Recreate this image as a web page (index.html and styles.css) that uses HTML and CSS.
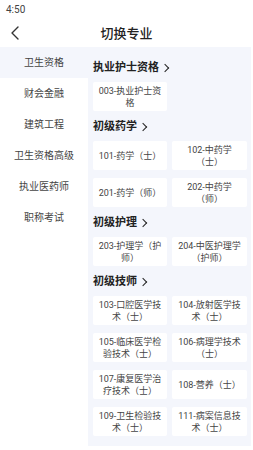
FILE: index.html
```html
<!DOCTYPE html>
<html lang="zh-CN">
<head>
    <meta charset="UTF-8">
    <meta name="viewport" content="width=device-width, initial-scale=1.0">
    <title>切换专业</title>
    <link rel="stylesheet" href="styles.css">
</head>
<body>
    <div class="status-bar">4:50</div>

    <header class="top-bar">
        <span class="back">
            <svg width="10" height="14" viewBox="0 0 10 14"><path d="M8 1 L2 7 L8 13" fill="none" stroke="#333" stroke-width="1.4" stroke-linecap="round" stroke-linejoin="round"/></svg>
        </span>
        <h1>切换专业</h1>
    </header>

    <div class="layout">
        <nav class="sidebar">
            <div class="side-item active">卫生资格</div>
            <div class="side-item">财会金融</div>
            <div class="side-item">建筑工程</div>
            <div class="side-item">卫生资格高级</div>
            <div class="side-item">执业医药师</div>
            <div class="side-item">职称考试</div>
        </nav>

        <main class="panel">
            <section class="group">
                <div class="group-title">执业护士资格 <span class="arrow"></span></div>
                <div class="cards">
                    <div class="card">003-执业护士资格</div>
                </div>
            </section>

            <section class="group">
                <div class="group-title">初级药学 <span class="arrow"></span></div>
                <div class="cards">
                    <div class="card">101-药学（士）</div>
                    <div class="card">102-中药学<wbr>（士）</div>
                    <div class="card">201-药学（师）</div>
                    <div class="card">202-中药学<wbr>（师）</div>
                </div>
            </section>

            <section class="group">
                <div class="group-title">初级护理 <span class="arrow"></span></div>
                <div class="cards">
                    <div class="card">203-护理学（护师）</div>
                    <div class="card">204-中医护理学（护师）</div>
                </div>
            </section>

            <section class="group">
                <div class="group-title">初级技师 <span class="arrow"></span></div>
                <div class="cards">
                    <div class="card">103-口腔医学技术（士）</div>
                    <div class="card">104-放射医学技术（士）</div>
                    <div class="card">105-临床医学检验技术（士）</div>
                    <div class="card">106-病理学技术（士）</div>
                    <div class="card">107-康复医学治疗技术（士）</div>
                    <div class="card">108-营养（士）</div>
                    <div class="card">109-卫生检验技术（士）</div>
                    <div class="card">111-病案信息技术（士）</div>
                </div>
            </section>
        </main>
    </div>
</body>
</html>
```

FILE: styles.css
```css
body {
    margin: 0;
    padding: 0;
    width: 253px;
    height: 450px;
    overflow: hidden;
    background: white;
    font-family: Roboto, "Noto Sans CJK SC", sans-serif;
    color: #333;
}

.status-bar {
    height: 18px;
    line-height: 20px;
    padding-left: 6px;
    font-size: 10px;
    color: #444;
}

.top-bar {
    position: relative;
    height: 29px;
    display: flex;
    align-items: center;
    justify-content: center;
}

.top-bar h1 {
    margin: 0;
    font-size: 13px;
    font-weight: 500;
    color: #222;
}

.back {
    position: absolute;
    left: 10px;
    top: 8px;
    display: flex;
}

.layout {
    display: flex;
    height: 402px;
}

.sidebar {
    width: 88px;
    flex-shrink: 0;
}

.side-item {
    height: 31px;
    line-height: 31px;
    text-align: center;
    font-size: 10px;
    color: #444;
}

.side-item.active {
    background: #f4f6fc;
}

.panel {
    flex: 1;
    background: #f4f6fc;
    padding: 5px 4px 0 5px;
    margin-right: 2px;
    margin-bottom: 3px;
}

.group-title {
    height: 20px;
    line-height: 20px;
    margin: 6px 0 4px;
    font-size: 11px;
    font-weight: 700;
    color: #222;
    display: flex;
    align-items: center;
}

.arrow {
    width: 5px;
    height: 5px;
    margin-left: 3px;
    border-top: 1.6px solid #222;
    border-right: 1.6px solid #222;
    transform: rotate(45deg);
}

.cards {
    display: grid;
    grid-template-columns: 74px 75px;
    column-gap: 5px;
    row-gap: 8px;
}

.card {
    background: white;
    min-height: 24px;
    padding: 2.5px 5px;
    display: flex;
    align-items: center;
    justify-content: center;
    text-align: center;
    font-size: 9px;
    line-height: 12px;
    color: #444;
    border-radius: 2px;
}
```
